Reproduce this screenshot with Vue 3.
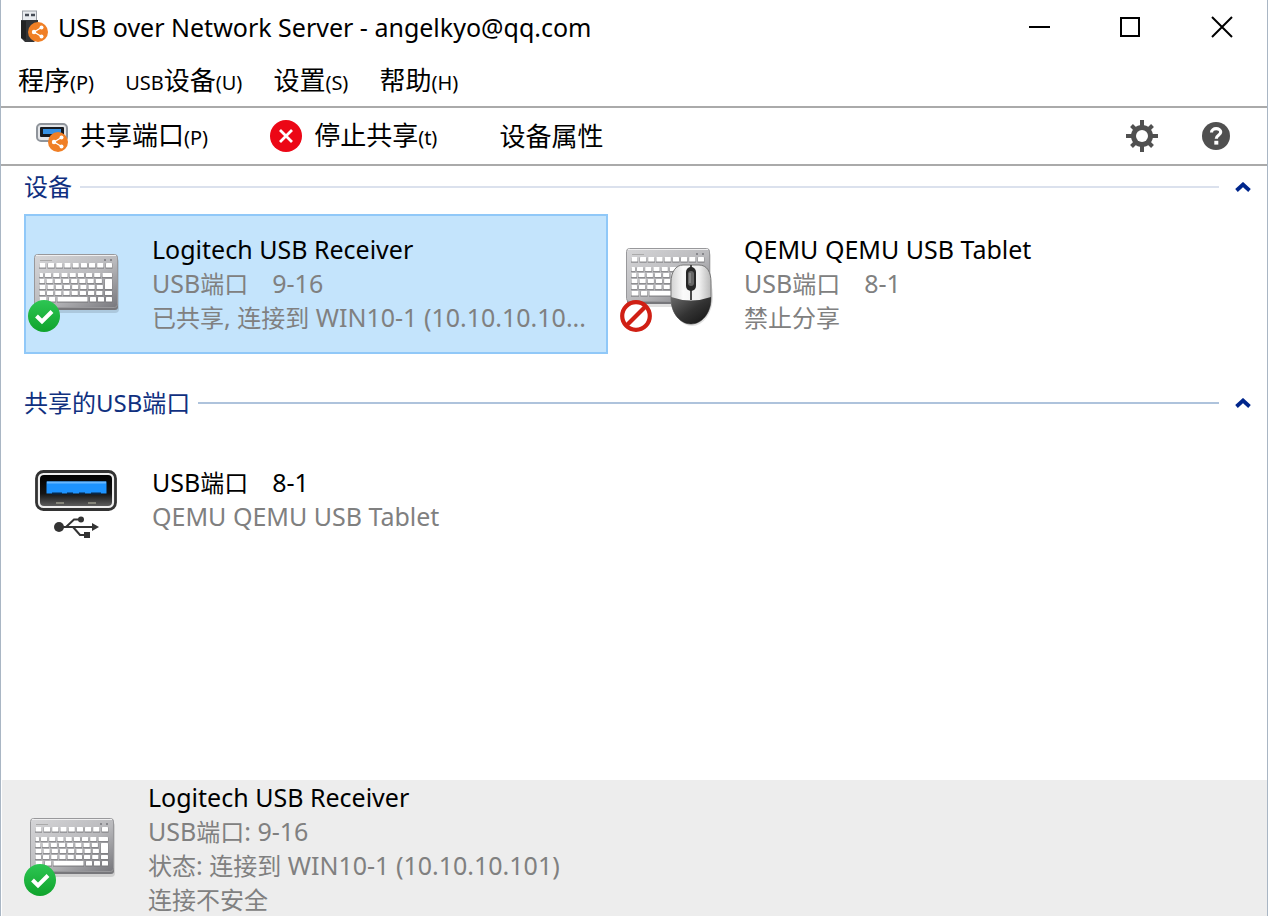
<template>
  <div class="window">
    <svg class="symbols" aria-hidden="true">
      <defs>
        <linearGradient id="kb-body" x1="0" y1="0" x2="1" y2="1">
          <stop offset="0" stop-color="#d6d6d8" />
          <stop offset="0.55" stop-color="#b9b9bc" />
          <stop offset="1" stop-color="#77777c" />
        </linearGradient>
        <linearGradient id="badge-ok" x1="0" y1="0" x2="0" y2="1">
          <stop offset="0" stop-color="#2dc653" />
          <stop offset="1" stop-color="#10a32c" />
        </linearGradient>
        <linearGradient id="mouse-top" x1="0" y1="0" x2="1" y2="0">
          <stop offset="0" stop-color="#d2d2d2" />
          <stop offset="0.3" stop-color="#fafafa" />
          <stop offset="0.7" stop-color="#f1f1f1" />
          <stop offset="1" stop-color="#b8b8b8" />
        </linearGradient>
        <linearGradient id="mouse-bottom" x1="0" y1="0" x2="1" y2="1">
          <stop offset="0" stop-color="#6a6a6a" />
          <stop offset="0.5" stop-color="#333" />
          <stop offset="1" stop-color="#111" />
        </linearGradient>
        <linearGradient id="port-inside" x1="0" y1="0" x2="0" y2="1">
          <stop offset="0" stop-color="#000" />
          <stop offset="0.6" stop-color="#151515" />
          <stop offset="1" stop-color="#5c5c5c" />
        </linearGradient>
      </defs>
      <symbol id="keyboard" viewBox="0 0 86 60">
        <rect x="2" y="4" width="83" height="55" rx="4" fill="#000" opacity="0.12" />
        <rect x="1" y="2" width="83" height="54" rx="3" fill="#77777b" />
        <rect x="0.5" y="0.5" width="83" height="53" rx="3" fill="url(#kb-body)" stroke="#98989b" />
        <path d="M2 1.5h80" stroke="#efeff0" />
        <path d="M6 6.500h12" stroke="#aaa" />
        <path d="M70 6h2M76 6h2" stroke="#77777c" stroke-width="1.500" />
        <rect v-for="(k, i) in keys" :key="'s' + i" :x="k[0] - 0.5" :y="k[1] + 0.5" :width="k[2] + 1" :height="k[3] + 0.8" fill="#77777b" opacity="0.7" />
        <rect v-for="(k, i) in keys" :key="'k' + i" :x="k[0]" :y="k[1]" :width="k[2]" :height="k[3]" rx="0.6" fill="#fff" />
      </symbol>
      <symbol id="ok" viewBox="0 0 32 32">
        <circle cx="16" cy="16" r="16" fill="url(#badge-ok)" />
        <path d="M8.500 16l5.500 5.500 10-10" fill="none" stroke="#fff" stroke-width="4" />
      </symbol>
      <symbol id="ban" viewBox="0 0 32 32">
        <circle cx="16" cy="16" r="13.800" fill="#fff" stroke="#d01f14" stroke-width="4.200" />
        <path d="M6.500 25.500l19-19" stroke="#d01f14" stroke-width="4.200" />
      </symbol>
      <symbol id="share" viewBox="0 0 20 20">
        <circle cx="10" cy="10" r="10" fill="#f07f25" />
        <path d="M13.500 5.500L6 10l7.500 4.500" fill="none" stroke="#fff" stroke-width="1.300" />
        <circle cx="13.500" cy="5.500" r="2" fill="#fff" />
        <circle cx="6" cy="10" r="2.200" fill="#fff" />
        <circle cx="13.500" cy="14.500" r="2" fill="#fff" />
      </symbol>
    </svg>

    <header class="titlebar">
      <svg class="app-icon" viewBox="0 0 28 34">
        <rect x="2.500" y="1" width="14" height="11" fill="#e8ebef" stroke="#9a9fa6" />
        <path d="M5 5h4M11 5h4" stroke="#454b55" stroke-width="2.500" />
        <path d="M1 10h17v18l-4 4H5l-4-4z" fill="#333436" />
        <path d="M1 11h5v19l-5-2z" fill="#222" />
        <use href="#share" x="8" y="12" width="20" height="20" />
      </svg>
      <h1>USB over Network Server - angelkyo@qq.com</h1>
      <div class="window-buttons">
        <button type="button" aria-label="最小化">
          <svg viewBox="0 0 24 24"><path d="M2 12h21" stroke="#000" stroke-width="2" /></svg>
        </button>
        <button type="button" aria-label="最大化">
          <svg viewBox="0 0 24 24"><rect x="3" y="3" width="18" height="18" fill="none" stroke="#000" stroke-width="2" /></svg>
        </button>
        <button type="button" aria-label="关闭">
          <svg viewBox="0 0 24 24"><path d="M3 2l20 20M23 2L3 22" stroke="#000" stroke-width="2" /></svg>
        </button>
      </div>
    </header>

    <nav class="menubar">
      <button v-for="m in menus" :key="m.key" type="button">
        <small v-if="m.prefix">{{ m.prefix }}</small>{{ m.label }}<small>({{ m.key }})</small>
      </button>
    </nav>

    <div class="toolbar">
      <button type="button">
        <svg class="tool-icon" viewBox="0 0 32 32">
          <rect x="1" y="4" width="30" height="17" rx="4" fill="#e4e6e9" stroke="#8f949b" stroke-width="2" />
          <rect x="4" y="7" width="24" height="10" rx="1" fill="#171a20" />
          <rect x="7" y="9" width="18" height="5" fill="#3691e4" />
          <use href="#share" x="12" y="12" width="20" height="20" />
        </svg>
        <span>共享端口<small>(P)</small></span>
      </button>
      <button type="button">
        <svg class="tool-icon" viewBox="0 0 32 32">
          <circle cx="16" cy="16" r="16" fill="#ec0716" />
          <path d="M10 10l12 12M22 10L10 22" stroke="#fff" stroke-width="2.800" />
        </svg>
        <span>停止共享<small>(t)</small></span>
      </button>
      <button type="button">设备属性</button>
      <div class="toolbar-right">
        <button type="button" aria-label="设置">
          <svg class="tool-icon" viewBox="0 0 32 32">
            <path d="M16 0v32M0 16h32M5.500 5.500l21 21M26.500 5.500l-21 21" stroke="#505050" stroke-width="4" />
            <circle cx="16" cy="16" r="11" fill="#505050" />
            <circle cx="16" cy="16" r="6" fill="#fff" />
          </svg>
        </button>
        <button type="button" aria-label="帮助">
          <svg class="help-icon" viewBox="0 0 28 28">
            <circle cx="14" cy="14" r="14" fill="#505050" />
            <path d="M9.500 10.500c0-5 9.200-5 9.200-.4 0 3.400-4.400 3-4.400 6.600" fill="none" stroke="#fff" stroke-width="3.200" />
            <rect x="12.300" y="18.800" width="4" height="3.800" fill="#fff" />
          </svg>
        </button>
      </div>
    </div>

    <main>
      <section v-for="g in groups" :key="g.title" :class="['group', g.type]">
        <div class="group-head">
          <h2>{{ g.title }}</h2>
          <span class="rule" />
          <button type="button" :aria-label="g.title">
            <svg viewBox="0 0 16 10"><path d="M1.500 8.500L8 2.500l6.500 6" fill="none" stroke="#00268c" stroke-width="3.800" /></svg>
          </button>
        </div>
        <ul>
          <li v-for="d in g.items" :key="d.icon" :class="{ selected: d.selected }">
            <svg class="device-icon" viewBox="0 0 96 96">
              <template v-if="d.icon === 'keyboard'">
                <use href="#keyboard" x="6" y="18" width="86" height="60" />
                <use href="#ok" x="0" y="64" width="32" height="32" />
              </template>
              <template v-else-if="d.icon === 'mouse'">
                <use href="#keyboard" x="6" y="12" width="86" height="60" />
                <ellipse cx="72" cy="60" rx="21" ry="30" fill="#000" opacity="0.12" />
                <path d="M51 62V46c0-10 5-17 12-17h16c8 0 12 7 12 17v16c0 15-9 26-20 26S51 77 51 62z" fill="url(#mouse-top)" stroke="#777" />
                <path d="M51 61q20 7 40 0v2c0 14-9 25-20 25S51 77 51 63z" fill="url(#mouse-bottom)" />
                <path d="M71 29v35" stroke="#4a4a4a" stroke-width="2" />
                <rect x="66" y="31" width="10" height="24" rx="5" fill="#272727" />
                <rect x="68" y="35" width="6" height="15" rx="3" fill="#666" />
                <path d="M70 37v10" stroke="#a6a6a6" />
                <use href="#ban" x="0" y="64" width="32" height="32" />
              </template>
              <template v-else>
                <rect x="8.500" y="19.500" width="79" height="38" rx="7" fill="#eee" stroke="#333" stroke-width="2.800" />
                <rect x="12" y="23" width="72" height="31" rx="4" fill="url(#port-inside)" />
                <rect x="18.500" y="29.500" width="60" height="12" fill="#1d93ff" />
                <path d="M19 30.500h59" stroke="#68b7ff" stroke-width="2" />
                <path d="M24 41.500h10M39 41.500h6M51 41.500h6M63 41.500h10" stroke="#09294a" stroke-width="2" />
                <path d="M28 51h8M60 51h8" stroke="#85857a" stroke-width="2" />
                <circle cx="31" cy="75" r="5" fill="#333" />
                <path d="M30 75h36M38 75l8-7.500h7M45 75l7 8h6" fill="none" stroke="#333" stroke-width="2" />
                <circle cx="53" cy="67.500" r="3" fill="#333" />
                <rect x="56" y="80" width="6" height="6" fill="#333" />
                <path d="M64 71l7 4-7 4z" fill="#333" />
              </template>
            </svg>
            <div class="device-text">
              <p v-for="line in d.lines" :key="line">
                <span v-for="(part, i) in split(line)" :key="i" :class="{ han: i % 2 }">{{ part }}</span>
              </p>
            </div>
          </li>
        </ul>
      </section>
    </main>

    <footer class="details">
      <svg class="device-icon" viewBox="0 0 96 96">
        <use href="#keyboard" x="6" y="18" width="86" height="60" />
        <use href="#ok" x="0" y="64" width="32" height="32" />
      </svg>
      <div class="device-text">
        <p v-for="line in details" :key="line">
          <span v-for="(part, i) in split(line)" :key="i" :class="{ han: i % 2 }">{{ part }}</span>
        </p>
      </div>
    </footer>
  </div>
</template>

<script setup>
const menus = [
  { label: '程序', key: 'P' },
  { prefix: 'USB', label: '设备', key: 'U' },
  { label: '设置', key: 'S' },
  { label: '帮助', key: 'H' },
]

const groups = [
  {
    title: '设备',
    type: 'devices',
    items: [
      {
        icon: 'keyboard',
        selected: true,
        lines: ['Logitech USB Receiver', 'USB端口\u30009-16', '已共享, 连接到 WIN10-1 (10.10.10.10...'],
      },
      { icon: 'mouse', lines: ['QEMU QEMU USB Tablet', 'USB端口\u30008-1', '禁止分享'] },
    ],
  },
  {
    title: '共享的USB端口',
    type: 'ports',
    items: [{ icon: 'port', lines: ['USB端口\u30008-1', 'QEMU QEMU USB Tablet'] }],
  },
]

const details = ['Logitech USB Receiver', 'USB端口: 9-16', '状态: 连接到 WIN10-1 (10.10.10.101)', '连接不安全']

// odd parts are Chinese, set slightly smaller than the Latin ones
const split = (text) => text.split(/([\u3000-\u9fff]+)/)

// keys as [x, y, width, height]
const keys = []
const row = (y, h, start, count, first, last) => {
  keys.push([5.5, y, first, h])
  for (let i = 0; i < count; i++) keys.push([start + i * 8.2, y, 6.2, h])
  if (last) keys.push([78 - last, y, last, h])
}
row(9, 4.5, 14, 7, 6, 6)
row(19, 4, 11, 7, 3.5, 9.5)
row(25, 4, 12.500, 7, 5, 0)
row(31, 4, 13.500, 7, 6, 0)
row(37, 4, 13, 7, 5.5, 7)
row(43, 4.5, 15, 1, 7, 6)
keys.push([23.5, 43, 30, 4.5], [56, 43, 6, 4.5], [64, 43, 6, 4.5], [71, 25, 7, 10])
</script>

<style>
body {
  margin: 0;
}
</style>

<style scoped>
.window {
  display: flex;
  flex-direction: column;
  box-sizing: border-box;
  min-height: 100vh;
  border: solid #a9b6c4;
  border-width: 0 1px;
  background: #fff;
  color: #000;
  font-family: "Noto Sans", "Noto Sans CJK SC", sans-serif;
  font-size: 25px;
  line-height: 34px;
}

.symbols {
  position: absolute;
  width: 0;
  height: 0;
}

svg {
  display: block;
  flex: none;
}

button {
  padding: 0;
  border: 0;
  background: none;
  color: inherit;
  font: inherit;
  font-size: 26px;
  white-space: nowrap;
}

small {
  font-size: 20px;
}

h1,
h2,
p {
  margin: 0;
  font-weight: 400;
}

.titlebar {
  display: flex;
  align-items: center;
  height: 54px;
  padding: 0 34px 0 19px;
}

.app-icon {
  width: 28px;
  height: 34px;
}

h1 {
  flex: 1;
  margin-left: 10px;
  font-size: 25px;
}

.window-buttons {
  display: flex;
  gap: 67px;
}

.window-buttons svg {
  width: 24px;
  height: 24px;
}

.menubar {
  display: flex;
  align-items: center;
  gap: 31px;
  height: 50px;
  padding: 2px 17px 0;
  border-bottom: 2px solid #aaa;
}

.toolbar {
  display: flex;
  align-items: center;
  gap: 62px;
  height: 56px;
  padding: 0 37px 0 35px;
  border-bottom: 2px solid #aaa;
}

.toolbar button {
  display: flex;
  align-items: center;
  gap: 12px;
}

.tool-icon {
  width: 32px;
  height: 32px;
}

.help-icon {
  width: 28px;
  height: 28px;
}

.toolbar-right {
  display: flex;
  gap: 44px;
  margin-left: auto;
}

main {
  flex: 1;
}

.group {
  margin-bottom: 28px;
}

.group-head {
  display: flex;
  align-items: center;
  gap: 8px;
  height: 42px;
  padding: 0 16px 0 23px;
}

h2 {
  color: #10307f;
  font-size: 24px;
}

.rule {
  flex: 1;
  height: 2px;
  margin-right: 8px;
}

.devices .rule {
  background: #dbe1ed;
}

.ports .rule {
  background: #aec3dc;
}

.group-head svg {
  width: 16px;
  height: 10px;
}

ul {
  display: grid;
  grid-template-columns: 1fr 1fr;
  gap: 8px;
  margin: 6px 0 0;
  padding: 0 67px 0 23px;
  list-style: none;
}

li {
  display: flex;
  align-items: center;
  gap: 28px;
  box-sizing: border-box;
  min-width: 0;
  height: 140px;
  padding: 0 2px;
  border: 2px solid transparent;
}

li.selected {
  border-color: #90c8f8;
  background: #c4e4fc;
}

li .device-text {
  padding-bottom: 2px;
}

.device-icon {
  overflow: visible;
  width: 96px;
  height: 96px;
}

.device-text {
  min-width: 0;
  color: #808080;
  white-space: nowrap;
}

.device-text p {
  height: 34px;
}

.device-text p:first-child {
  color: #000;
}

.han {
  font-size: 24px;
}

.details {
  display: flex;
  align-items: center;
  gap: 28px;
  margin-left: 1px;
  padding: 0 22px;
  background: #ededed;
}
</style>
